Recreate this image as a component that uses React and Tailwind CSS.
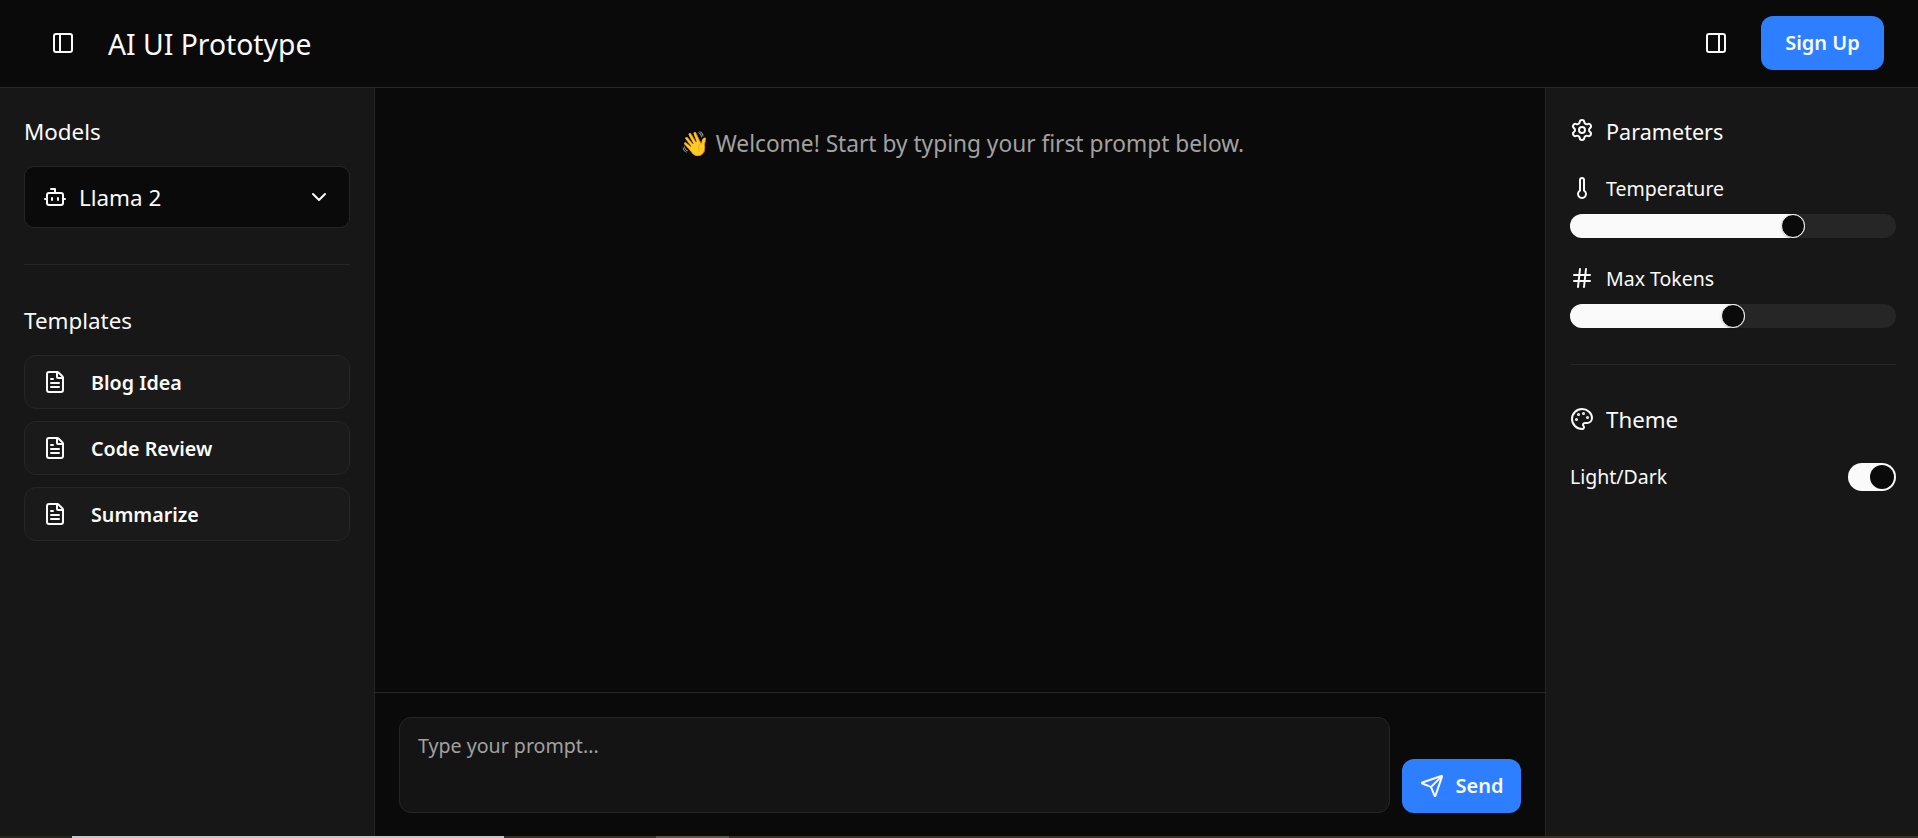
import React from "react";
import { Bot, ChevronDown, FileText, Hash, Palette, PanelLeft, PanelRight, Send, Settings, Thermometer } from "lucide-react";

const templates = ["Blog Idea", "Code Review", "Summarize"];

function ParamSlider({ icon: Icon, label, value, mt }) {
  return (
    <div className={mt}>
      <div className="flex h-6 items-center gap-3 text-[19.5px] text-[#fafafa]">
        <Icon size={24} />
        <span className="pt-0.5">{label}</span>
      </div>
      <div className="relative mt-[14px] h-6 rounded-full bg-[#262626]">
        <div className="h-full rounded-full bg-[#fafafa]" style={{ width: value }} />
        <div
          className="absolute top-0 h-6 w-6 -translate-x-full rounded-full border border-[#fafafa] bg-[#0a0a0a] shadow-sm"
          style={{ left: value }}
        />
      </div>
    </div>
  );
}

export default function App() {
  return (
    <div className="flex h-[838px] flex-col overflow-hidden bg-[#0a0a0a] font-['Noto_Sans',sans-serif] text-[#fafafa]">
      {/* header */}
      <header className="flex h-[88px] shrink-0 items-center justify-between border-b border-[#262626] pb-px pl-[51px] pr-[34px]">
        <div className="flex items-center gap-[33px]">
          <PanelLeft size={24} />
          <h1 className="pt-0.5 text-[28.3px]">AI UI Prototype</h1>
        </div>
        <div className="flex items-center gap-[33px]">
          <PanelRight size={24} />
          <button className="h-[54px] w-[123px] rounded-xl bg-[#2e7fff] text-[20px] font-semibold">Sign Up</button>
        </div>
      </header>

      <div className="flex min-h-0 flex-1">
        {/* left sidebar */}
        <aside className="w-[375px] shrink-0 border-r border-[#262626] bg-[#171717] px-6 pt-6">
          <h2 className="text-[22.4px] leading-10">Models</h2>
          <div className="mt-[14px] flex h-[62px] items-center gap-3 rounded-[10px] border border-[#262626] bg-[#0a0a0a] pl-[18px] pr-[18px]">
            <Bot size={24} />
            <span className="flex-1 pt-0.5 text-[22.4px]">Llama 2</span>
            <ChevronDown size={24} />
          </div>
          <div className="mt-9 h-px bg-[#262626]" />
          <h2 className="mt-10 text-[22.4px] leading-8">Templates</h2>
          <div className="mt-[18px] flex flex-col gap-3">
            {templates.map((t) => (
              <button
                key={t}
                className="flex h-[54px] items-center gap-6 rounded-xl border border-[#262626] bg-[#1a1a1a] pl-[18px] text-[19.7px] font-semibold"
              >
                <FileText size={24} />
                <span className="pt-0.5">{t}</span>
              </button>
            ))}
          </div>
        </aside>

        {/* chat */}
        <main className="flex min-w-0 flex-1 flex-col">
          <div className="flex-1 pl-1 pt-[38px] text-center text-[22.7px] leading-[34px] text-[#a1a1a1]">
            <span className="text-[24px]">👋</span> Welcome! Start by typing your first prompt below.
          </div>
          <div className="flex items-end gap-3 border-t border-[#262626] px-6 pb-[23px] pt-6">
            <div className="h-[96px] flex-1 rounded-xl border border-[#262626] bg-[#141414] px-[18px] pt-[13px] text-[19.6px] text-[#a1a1a1]">
              Type your prompt...
            </div>
            <button className="flex h-[54px] w-[119px] items-center justify-center gap-3 rounded-xl bg-[#2e7fff] text-[20px] font-semibold">
              <Send size={24} />
              Send
            </button>
          </div>
        </main>

        {/* right sidebar */}
        <aside className="w-[373px] shrink-0 border-l border-[#262626] bg-[#171717] pl-6 pr-[22px] pt-[23px]">
          <div className="flex h-10 items-center gap-3 text-[21.6px]">
            <Settings size={24} className="-mt-0.5" />
            <span className="pt-0.5">Parameters</span>
          </div>
          <ParamSlider icon={Thermometer} label="Temperature" value="72.1%" mt="mt-[25px]" />
          <ParamSlider icon={Hash} label="Max Tokens" value="53.6%" mt="mt-7" />
          <div className="mt-9 h-px bg-[#262626]" />
          <div className="mt-[35px] flex h-10 items-center gap-3 text-[22.3px]">
            <Palette size={24} className="-mt-0.5" />
            <span>Theme</span>
          </div>
          <div className="mt-[22px] flex items-center justify-between text-[19.5px]">
            <span>Light/Dark</span>
            <div className="flex h-7 w-12 items-center justify-end rounded-full bg-[#fafafa] pr-0.5">
              <div className="h-6 w-6 rounded-full bg-[#0a0a0a]" />
            </div>
          </div>
        </aside>
      </div>

      {/* strip of whatever sat below the window */}
      <div className="flex h-[2px] shrink-0 bg-[#3a3028]">
        <div className="w-[72px] bg-[#22261f]" />
        <div className="w-[432px] bg-[#c8c8c8]" />
        <div className="w-[152px]" />
        <div className="w-[73px] bg-[#5a554c]" />
      </div>
    </div>
  );
}
